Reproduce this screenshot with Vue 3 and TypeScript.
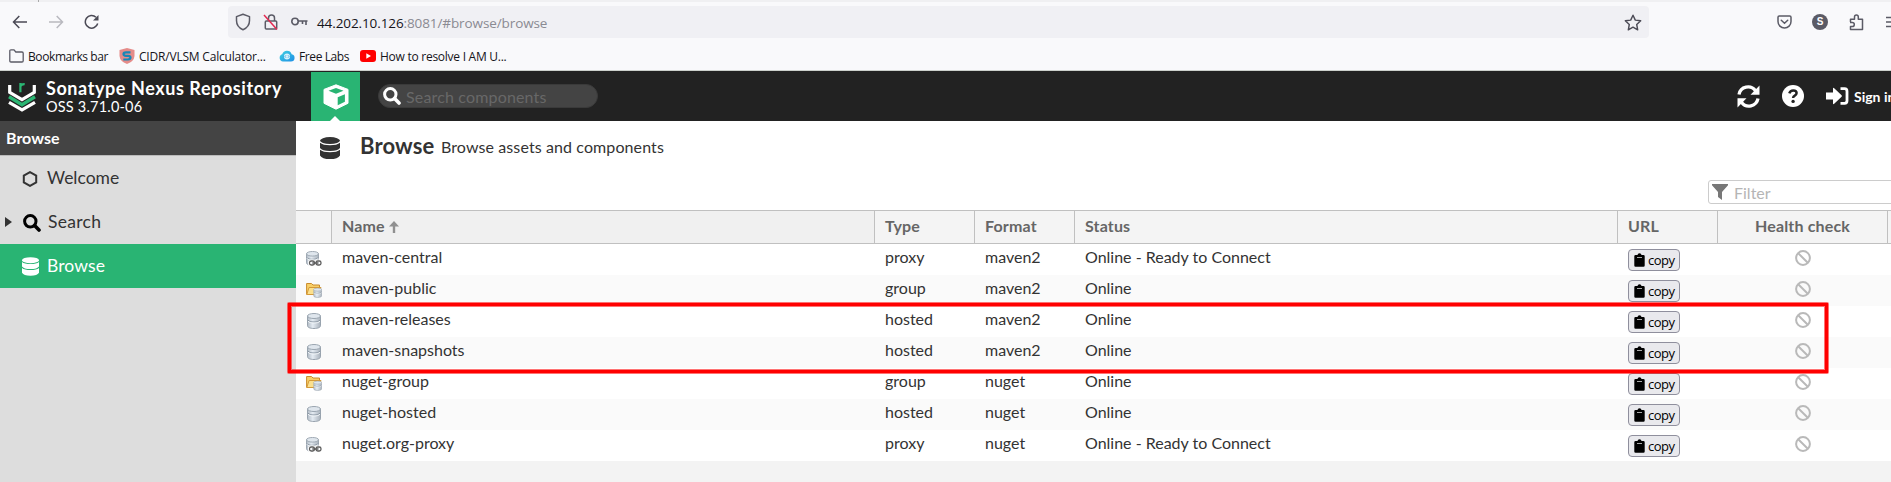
<script setup lang="ts">
interface Repo {
  name: string
  kind: 'proxy' | 'group' | 'hosted'
  format: string
  status: string
}

const ready = 'Online - Ready to Connect'
const repos: Repo[] = [
  { name: 'maven-central', kind: 'proxy', format: 'maven2', status: ready },
  { name: 'maven-public', kind: 'group', format: 'maven2', status: 'Online' },
  { name: 'maven-releases', kind: 'hosted', format: 'maven2', status: 'Online' },
  { name: 'maven-snapshots', kind: 'hosted', format: 'maven2', status: 'Online' },
  { name: 'nuget-group', kind: 'group', format: 'nuget', status: 'Online' },
  { name: 'nuget-hosted', kind: 'hosted', format: 'nuget', status: 'Online' },
  { name: 'nuget.org-proxy', kind: 'proxy', format: 'nuget', status: ready },
]
</script>

<template>
  <div class="window">
    <svg class="defs" width="0" height="0">
      <defs>
        <linearGradient id="steel" x1="0" x2="1" y1="0" y2="0">
          <stop offset="0" stop-color="#b3bcc6" />
          <stop offset="0.4" stop-color="#e4ebf2" />
          <stop offset="1" stop-color="#a9b2bc" />
        </linearGradient>
        <linearGradient id="cloud" x1="0" x2="1" y1="0" y2="1">
          <stop offset="0" stop-color="#3fd0e0" />
          <stop offset="1" stop-color="#1f8fe6" />
        </linearGradient>
        <symbol id="drum" viewBox="0 0 20 22">
          <ellipse cx="10" cy="3.6" rx="10" ry="3.5" />
          <path d="M0 5.700Q3 8.200 10 8.200T20 5.700V11Q18 14 10 14T0 11Z" />
          <path d="M0 12.700Q3 15.200 10 15.200T20 12.700V18.400Q18 22 10 22T0 18.400Z" />
        </symbol>
        <symbol id="lens" viewBox="0 0 18 18">
          <circle cx="7.3" cy="7.3" r="5.700" fill="none" stroke="currentColor" stroke-width="3" />
          <path d="M11.600 11.600L16 16" stroke="currentColor" stroke-width="3.600" stroke-linecap="round" />
        </symbol>
        <symbol id="store" viewBox="0 0 14 16">
          <path d="M.5 3v9.800c0 1.500 2.400 2.700 6.500 2.700s6.500-1.200 6.500-2.700V3z" fill="url(#steel)" stroke="#98a3ae" />
          <path d="M1 7c1 1.500 3 2 6 2s5-.5 6-2" fill="none" stroke="#8996a3" />
          <path d="M1 8c1 1.500 3 2 6 2s5-.5 6-2" fill="none" stroke="#f3f7fa" />
          <ellipse cx="7" cy="3" rx="6.500" ry="2.500" fill="#dfe6ed" stroke="#9aa5b0" />
        </symbol>
      </defs>
    </svg>

    <div class="tabs"><i></i></div>

    <div class="nav">
      <svg class="back" width="16" height="14" viewBox="0 0 16 14" fill="none" stroke="#4b4a55" stroke-width="1.500"><path d="M15 7H1.500M7.300 1L1.500 7l5.800 6" /></svg>
      <svg class="fwd" width="16" height="14" viewBox="0 0 16 14" fill="none" stroke="#b9b9bf" stroke-width="1.500"><path d="M1 7h13.500M8.700 1l5.800 6-5.800 6" /></svg>
      <svg class="reload" width="16" height="16" viewBox="0 0 16 16" fill="none" stroke="#4b4a55" stroke-width="1.500"><path d="M13.700 9.500A6.300 6.300 0 1 1 12 3.300" /><path d="M14.500 1v5.500H9z" fill="#4b4a55" stroke="none" /></svg>
      <div class="address">
        <svg class="shield" width="16" height="18" viewBox="0 0 16 18" fill="none" stroke="#5b5b66" stroke-width="1.500"><path d="M8 1.200L14.500 3.600V7.500c0 4-2.500 7.500-6.500 9.200C4 15 1.500 11.500 1.500 7.500V3.600z" stroke-linejoin="round" /></svg>
        <svg class="lock" width="16" height="18" viewBox="0 0 16 18" fill="none" stroke="#5b5b66" stroke-width="1.500"><rect x="2.300" y="8" width="11.400" height="8" rx="1" /><path d="M5.500 8V5a3 3 0 0 1 6 0V8" /><path d="M1 2L14 16.500" stroke="#e22850" /></svg>
        <svg class="key" width="17" height="10" viewBox="0 0 17 10" fill="none" stroke="#5b5b66" stroke-width="1.600"><circle cx="4" cy="4.500" r="3.200" /><path d="M7 4h9.500M11.500 4v3M15 4v4" /></svg>
        <span class="url"><b>44.202.10.126</b>:8081/#browse/browse</span>
        <svg class="star" width="18" height="17" viewBox="0 0 18 17" fill="none" stroke="#4b4a55" stroke-width="1.400" stroke-linejoin="round"><path d="M9 1.200l2.300 4.900 5.400.7-4 3.700 1 5.300L9 13.200l-4.700 2.600 1-5.300-4-3.700 5.400-.7z" /></svg>
      </div>
      <svg class="pocket" width="15" height="14" viewBox="0 0 15 14" fill="none" stroke="#5b5b66" stroke-width="1.500" stroke-linecap="round"><path d="M1 2.300Q1 1 2.300 1h10.400Q14 1 14 2.300V6.500a6.500 6.500 0 0 1-13 0zM4.300 5.300L7.500 8.300l3.200-3" /></svg>
      <span class="avatar">S</span>
      <svg class="ext" width="15" height="17" viewBox="0 0 15 17" fill="none" stroke="#5b5b66" stroke-width="1.500" stroke-linejoin="round"><path d="M1.500 8V5.200H5.500V3a1.900 1.900 0 0 1 3.800 0v2.200H13.500V15.500H1.500V12.600H3.200a2 2 0 0 0 0-4.200H1" /></svg>
      <svg class="menu" width="16" height="12" viewBox="0 0 16 12" stroke="#5b5b66" stroke-width="1.400"><path d="M0 1.500h16M0 6h16M0 10.500h16" /></svg>
    </div>

    <div class="bookmarks">
      <svg class="folder" width="15" height="14" viewBox="0 0 15 14" fill="none" stroke="#5b5b66" stroke-width="1.300"><path d="M.8 2Q.8 .8 2 .8H5L6.800 3H13Q14.200 3 14.200 4.200V11.800Q14.200 13 13 13H2Q.8 13 .8 11.800z" /></svg>
      <span class="b1">Bookmarks bar</span>
      <svg class="cidr" width="16" height="16" viewBox="0 0 16 16"><path d="M8 0L15.500 2V8Q15 13.500 8 16Q1 13.500 .5 8V2z" fill="#e58c8a" /><path d="M11.500 4.300H7Q4.500 4.300 4.500 6T7 7.800H9Q11.500 7.800 11.500 9.600T9 11.500H4.300" fill="none" stroke="#1787b7" stroke-width="2.200" /></svg>
      <span class="b2">CIDR/VLSM Calculator...</span>
      <svg class="labs" width="16" height="12" viewBox="0 0 16 12"><path d="M4 11.500A3.700 3.700 0 0 1 3.200 4.300 5 5 0 0 1 12.700 4.200 3.700 3.700 0 0 1 12 11.500z" fill="url(#cloud)" /><circle cx="8" cy="6.500" r="3" fill="#d9f3fb" /><path d="M7 5.300L6 6.500l1 1.200M9 5.300l1 1.200-1 1.200" fill="none" stroke="#2597dd" stroke-width=".8" /></svg>
      <span class="b3">Free Labs</span>
      <svg class="yt" width="16" height="12" viewBox="0 0 16 12"><rect width="16" height="12" rx="3" fill="#f00" /><path d="M6.300 3.300L11 6 6.300 8.700z" fill="#fff" /></svg>
      <span class="b4">How to resolve I AM U...</span>
    </div>

    <header class="top">
      <svg class="logo" width="28" height="30" viewBox="0 0 28 30" fill="none"><g stroke="#fff" stroke-width="3.200"><path d="M1.700 3v7.300L14 17.600l12.300-7.300V3" /><path d="M1 20.300l13 7.700 13-7.700" /></g><path d="M1 14.800l13 7.900 13-7.900" stroke="#2bb673" stroke-width="3.400" /><path d="M12.400 10.300V1M12.400 4.500Q13 1.900 16.700 2.100" stroke="#2bb673" stroke-width="2.200" /></svg>
      <div class="brand">
        <div class="product">Sonatype Nexus Repository</div>
        <div class="version">OSS 3.71.0-06</div>
      </div>
      <div class="mode">
        <svg width="26" height="26" viewBox="0 0 26 26"><path d="M13 .8L25 5.400V19.300L13 25.200 1 19.300V5.400z" fill="#fff" stroke="#fff" stroke-linejoin="round" /><path d="M5.500 6.700L13 4l7.500 2.700L13 9.700zM14.700 13.200l7.200-3v7.500l-7.200 3.600z" fill="#29b473" /></svg>
        <i class="notch"></i>
      </div>
      <div class="search">
        <svg width="18" height="18"><use href="#lens" /></svg>
        <span>Search components</span>
      </div>
      <svg class="refresh" width="23" height="23" viewBox="0 0 23 23" fill="none" stroke="#fff" stroke-width="3.300"><path d="M2 9.500A9.200 9.200 0 0 1 18.500 5.800M21 13.500A9.200 9.200 0 0 1 4.500 17.200" /><path d="M22.500.5v9.300h-9zM.5 22.500v-9.300h9z" fill="#fff" stroke="none" /></svg>
      <svg class="help" width="22" height="22" viewBox="0 0 22 22"><circle cx="11" cy="11" r="11" fill="#fff" /><path d="M7.300 8.400Q8.200 5.400 11.200 5.400 14.600 5.400 14.600 8.100 14.600 9.600 12.800 10.600 11.100 11.500 11.100 13" fill="none" stroke="#222" stroke-width="2.500" /><circle cx="11.100" cy="16.400" r="1.700" fill="#222" /></svg>
      <svg class="signin" width="23" height="18" viewBox="0 0 23 18"><path d="M0 5.600h7V1.700Q7 .2 8.200 1.200L15.600 8.300Q16.200 9 15.600 9.700L8.200 16.800Q7 17.800 7 16.300V12.400H0z" fill="#fff" /><path d="M14.500 1.700H18.500Q21 1.700 21 4.200V13.800Q21 16.300 18.500 16.300H14.500" fill="none" stroke="#fff" stroke-width="2.800" /></svg>
      <span class="signtext">Sign in</span>
    </header>

    <div class="body">
      <aside>
        <div class="side-title">Browse</div>
        <div class="item">
          <svg class="ico hex" width="18" height="16" viewBox="0 0 18 16"><path d="M8 1.100l6.200 3.400v7L8 14.900 1.800 11.500v-7z" fill="none" stroke="#333" stroke-width="2" /></svg>
          <span class="w">Welcome</span>
        </div>
        <div class="item">
          <svg class="caret" width="7" height="10" viewBox="0 0 7 10"><path d="M0 0l7 5-7 5z" fill="#333" /></svg>
          <svg class="ico black" width="18" height="18"><use href="#lens" /></svg>
          <span class="s">Search</span>
        </div>
        <div class="item active">
          <svg class="ico drum" width="17" height="19" fill="#fff"><use href="#drum" /></svg>
          <span>Browse</span>
        </div>
      </aside>

      <main>
        <div class="heading">
          <svg width="20" height="22" fill="#333"><use href="#drum" /></svg>
          <h1>Browse</h1>
          <span>Browse assets and components</span>
        </div>
        <div class="filterbar">
          <div class="filter">
            <svg width="16" height="16" viewBox="0 0 16 16"><path d="M0 0h16v1.200L10 8v8L6 13V8L0 1.200z" fill="#777" /></svg>
            <span>Filter</span>
          </div>
        </div>
        <div class="row head">
          <div></div>
          <div class="sorted"><span class="n">Name</span><svg width="10" height="12" viewBox="0 0 10 12"><path d="M5 12V4" stroke="#909090" stroke-width="2.400" /><path d="M5 0l5 5.500H0z" fill="#909090" /></svg></div>
          <div>Type</div>
          <div>Format</div>
          <div>Status</div>
          <div>URL</div>
          <div class="mid">Health check</div>
          <div></div>
        </div>
        <div v-for="repo in repos" :key="repo.name" class="row data">
          <div class="kind">
            <svg v-if="repo.kind === 'hosted'" width="16" height="16"><use href="#store" x="1" width="14" height="16" /></svg>
            <svg v-else-if="repo.kind === 'proxy'" width="16" height="16" viewBox="0 0 16 16">
              <use href="#store" x="0" y="0" width="13" height="14.800" />
              <g fill="none" stroke-linecap="round"><g stroke="#fff" stroke-width="3"><rect x="3.500" y="10" width="5" height="4" rx="1.800" /><rect x="10" y="10" width="5" height="4" rx="1.800" /></g><g stroke="#5c5c5c" stroke-width="1.300"><rect x="3.500" y="10" width="5" height="4" rx="1.800" /><rect x="10" y="10" width="5" height="4" rx="1.800" /><path d="M6.800 12h5" /></g></g>
            </svg>
            <svg v-else width="16" height="16" viewBox="0 0 16 16">
              <path d="M.6 12.500V1.500H5.500L7 3h6.500v3" fill="#f7cf68" stroke="#c98a2b" />
              <path d="M.8 12.500L3 5.500H15L13 12.500z" fill="#fbe08e" stroke="#d59a38" />
              <use href="#store" x="7.300" y="5.500" width="8.700" height="10.500" />
            </svg>
          </div>
          <div>{{ repo.name }}</div>
          <div>{{ repo.kind }}</div>
          <div class="fmt">{{ repo.format }}</div>
          <div>{{ repo.status }}</div>
          <div class="urlcell">
            <button><svg width="11" height="14" viewBox="0 0 11 14"><path d="M1.500 2H3.500Q3.700 .2 5.500 .2T7.500 2h2Q10.700 2 10.700 3.200V12.500Q10.700 13.700 9.500 13.700H1.500Q.3 13.700 .3 12.500V3.200Q.3 2 1.500 2z" /><path d="M3 4.500h5" stroke="#aaa" /></svg>copy</button>
          </div>
          <div class="mid"><svg width="16" height="16" viewBox="0 0 16 16" fill="none" stroke="#b9b9b9" stroke-width="2"><circle cx="8" cy="8" r="6.900" /><path d="M3.200 3.200l9.600 9.600" /></svg></div>
          <div></div>
        </div>
      </main>
    </div>
    <div class="marker"><i></i></div>
  </div>
</template>

<style>
html, body { overflow: hidden; }
</style>

<style scoped>
.window { position: relative; width: 1891px; height: 482px; overflow: hidden; display: flex; flex-direction: column; background: #f9f9fb; font-family: Lato, "Liberation Sans", sans-serif; font-size: 16px; color: #333; box-sizing: border-box; white-space: nowrap; }
svg { display: block; flex: none; }
.defs { position: absolute; }
.tabs { height: 2px; background: #f0f0f2; flex: none; }
.tabs i { display: block; width: 1px; height: 2px; margin-left: 38px; background: #aaa; }

.nav { height: 40px; display: flex; align-items: center; flex: none; font-family: "Open Sans", sans-serif; }
.back { margin-left: 12px; }
.fwd { margin-left: 20px; }
.reload { margin-left: 20px; }
.address { box-sizing: border-box; flex: none; width: 1421px; height: 32px; margin-left: 128px; background: #f0f0f4; border-radius: 4px; display: flex; align-items: center; }
.shield { margin-left: 7px; }
.lock { margin-left: 12px; }
.key { margin-left: 12px; }
.url { margin-left: 9px; font-size: 13.500px; color: #8a8a92; line-height: 20px; letter-spacing: -.1px; padding-top: 2px; }
.url b { font-weight: 400; color: #15141a; }
.star { margin-left: auto; margin-right: 7px; }
.pocket { margin-left: 128px; }
.avatar { flex: none; width: 16px; height: 16px; border-radius: 50%; background: #5b5b66; color: #fff; font: 700 10px/16px "Liberation Sans", sans-serif; text-align: center; margin-left: 20px; }
.ext { margin-left: 21px; }
.menu { margin-left: 22px; }

.bookmarks { height: 28px; flex: none; display: flex; align-items: center; font: 12px/20px "Open Sans", sans-serif; letter-spacing: -.4px; color: #15141a; border-bottom: 1px solid #ccd0cc; }
.folder { margin-left: 9px; }
.bookmarks span { margin-left: 4px; flex: none; padding-top: 1px; }
.b1 { width: 91px; }
.b2 { width: 140px; letter-spacing: -.2px; }
.b3 { width: 61px; }
.b4 { width: 140px; letter-spacing: -.26px; }

.top { height: 50px; flex: none; display: flex; align-items: center; background: #222; color: #fff; }
.top > * { flex: none; }
.logo { margin-left: 8px; margin-top: 2px; }
.brand { width: 265px; margin-left: 10px; }
.product { font-weight: 700; font-size: 18px; line-height: 20px; letter-spacing: .58px; padding-top: 1px; }
.version { font-size: 14.500px; line-height: 17px; letter-spacing: .2px; }
.mode { position: relative; width: 49px; height: 49px; margin-top: 1px; background: #29b473; display: flex; align-items: center; justify-content: center; }
.notch { position: absolute; left: 19px; bottom: 0; border: 5px solid transparent; border-top: 0; border-bottom-color: #fff; }
.search { box-sizing: border-box; width: 220px; height: 24px; margin-left: 18px; border-radius: 12px; background: #444; border: 1px solid #3a3a3a; display: flex; align-items: center; padding-left: 4px; color: #fff; }
.search span { margin-left: 5px; color: #686868; font-size: 16px; letter-spacing: .16px; line-height: 20px; padding-top: 2px; }
.refresh { margin-left: 1139px; }
.help { margin-left: 22px; }
.signin { margin-left: 22px; }
.signtext { margin-left: 5px; font-weight: 700; font-size: 14px; }

.body { display: flex; flex: 1; }
aside { width: 296px; background: #ddd; flex: none; }
.side-title { height: 34px; line-height: 34px; padding-left: 6px; background: #444; color: #fff; font-weight: 700; font-size: 16px; border-bottom: 1px solid #bbb; }
.item { box-sizing: border-box; position: relative; height: 44px; display: flex; align-items: center; padding-left: 22px; font-size: 17.500px; }
.item .ico { margin-top: 3px; width: 18px; }
.item span { margin-left: 7px; padding-bottom: 1px; }
.item .hex { margin-top: 2px; }
.item .black { color: #000; margin-left: 1px; margin-top: 2px; }
.item .s { margin-left: 7px; letter-spacing: .3px; }
.caret { position: absolute; left: 5px; top: 17px; }
.item .drum { width: 17px; margin-top: 0; }
.item.active span { margin-left: 8px; letter-spacing: .1px; }
.active { background: #29b473; color: #fff; }

main { width: 1595px; background: #f3f3f3; flex: none; overflow: hidden; }
.heading { height: 59px; background: #fff; display: flex; align-items: flex-start; }
.heading svg { margin: 16px 0 0 24px; }
h1 { margin: 12px 0 0 20px; font-size: 22px; line-height: 26px; font-weight: 700; width: 81px; letter-spacing: .15px; }
.heading span { font-size: 16px; line-height: 20px; margin-top: 16px; letter-spacing: .1px; }
.filterbar { height: 30px; background: #fff; display: flex; }
.filter { box-sizing: border-box; width: 240px; height: 24px; margin-left: 1412px; flex: none; border: 1px solid #ccc; border-radius: 3px; display: flex; align-items: center; padding-left: 3px; color: #b5b5b5; }
.filter span { margin-left: 6px; padding-top: 2px; line-height: 20px; }

.row { display: grid; grid-template-columns: 36px 543px 100px 100px 543px 100px 170px 3px; }
.head { height: 34px; box-sizing: border-box; background: #f4f4f4; border: 1px solid #c0c0c0; border-width: 1px 0; color: #666; font-weight: 700; line-height: 30px; font-size: 16px; letter-spacing: .15px; }
.head div { border-right: 1px solid #c0c0c0; padding-left: 10px; box-sizing: border-box; }
.head div:last-child { border: 0; }
.head .sorted { display: flex; align-items: center; background: #f0f0f0; }
.sorted .n { height: 32px; }
.sorted svg { margin-left: 4px; }
.data { height: 31px; background: #fff; line-height: 26px; }
.data:nth-child(odd) { background: #fafafa; }
.data > div { padding-left: 10px; overflow: hidden; }
.data > .kind { padding-top: 7px; }
.row .mid { padding-left: 0; text-align: center; }
.data .mid svg { margin: 6px 0 0 77px; }
button { box-sizing: border-box; width: 52px; height: 22px; margin: 5px 0 0; padding: 0 0 0 5px; border: 1px solid #8f8f9d; border-radius: 4px; background: #e9e9ed; display: flex; align-items: center; gap: 3px; font: 13px/20px "Open Sans", sans-serif; color: #000; letter-spacing: -.5px; }

.marker { position: absolute; left: 287px; top: 302px; width: 1542px; height: 72px; box-sizing: border-box; border: 5px solid rgba(255, 0, 0, .55); border-radius: 2px; }
.marker i { position: absolute; inset: -4px; border: 3px solid #f00; }
</style>
